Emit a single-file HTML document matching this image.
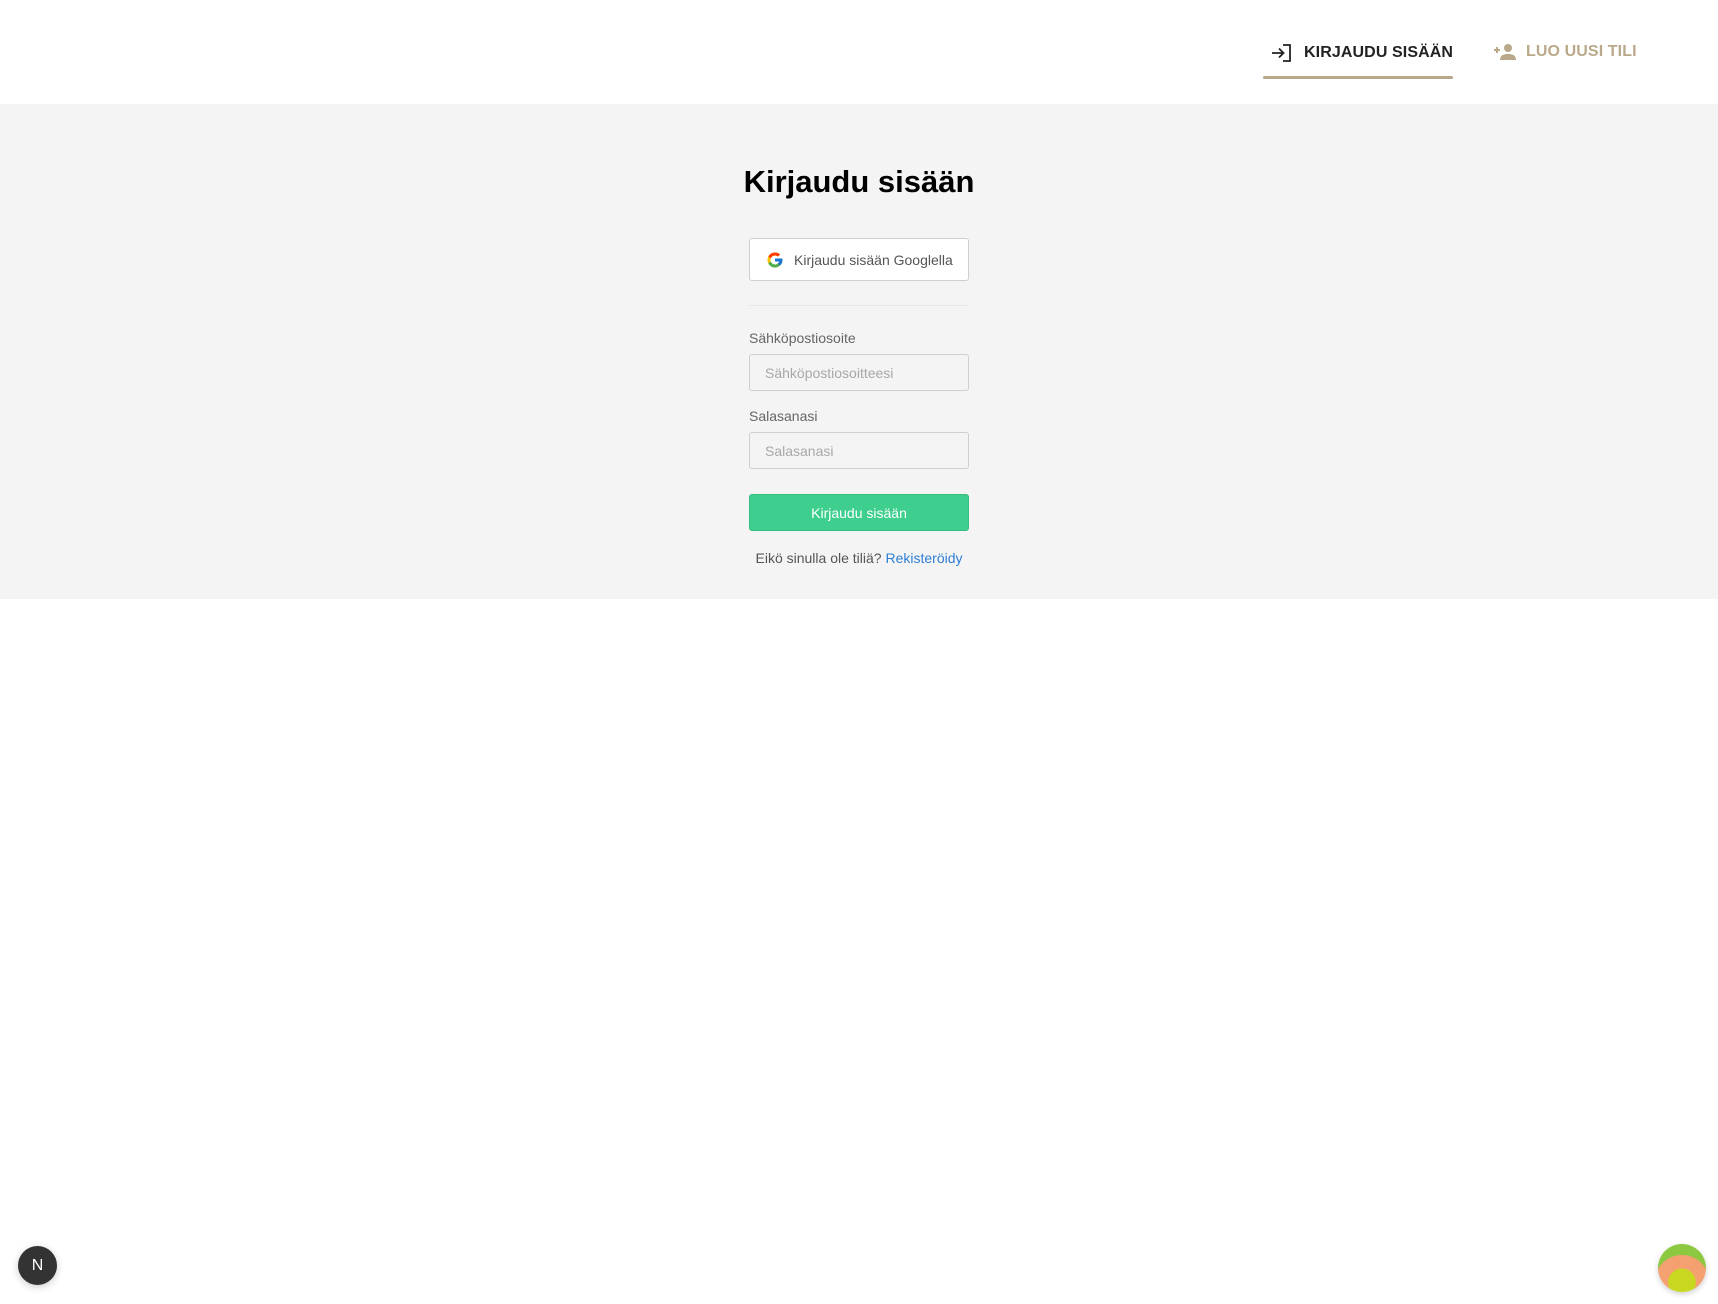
<!DOCTYPE html>
<html><head><meta charset="utf-8"><style>
*{box-sizing:border-box;margin:0;padding:0}
body{width:1718px;height:1304px;background:#fff;font-family:"Liberation Sans",Arial,sans-serif;position:relative;overflow:hidden}
.hdr{height:104px;position:relative;background:#fff}
.nav{position:absolute;top:43px;font-weight:bold;font-size:16px;letter-spacing:0.1px;display:flex;align-items:center;font-family:"Liberation Sans",sans-serif}
.n1{left:1271px;color:#222}
.n2{left:1493px;color:#b9a88a}
.ul{position:absolute;left:1263px;top:76px;width:190px;height:3px;background:#b6a888;border-radius:2px}
.main{background:#f4f4f4;height:495px;position:relative}
h1{position:absolute;left:0;width:1718px;text-align:center;top:60px;font-size:31px;font-weight:bold;color:#000;font-family:"Liberation Sans",sans-serif}
.col{position:absolute;left:749px;width:220px}
.g{top:134px;height:43px;background:#fff;border:1px solid #cfcfcf;border-radius:3px;display:flex;align-items:center;padding-left:16px;font-size:14px;color:#555}
.div{top:201px;height:1px;background:#e6e6e6}
.lbl{font-size:14px;color:#666}
.inp{height:37px;border:1px solid #cfcfcf;border-radius:3px;background:#f4f4f4;font-size:14px;color:#a8a8a8;padding-left:15px;display:flex;align-items:center}
.btn{top:390px;height:37px;background:#3ecf8e;border:1px solid #38bc80;border-radius:3px;color:#fff;font-size:14px;display:flex;align-items:center;justify-content:center}
.ft{top:446px;text-align:center;font-size:14px;color:#555;width:220px}
.ft a{color:#2f7fd6;text-decoration:none}
</style></head><body>
<div class="hdr">
<div class="nav n1"><svg width="22" height="20" viewBox="0 0 22 20" style="margin-right:11px"><path d="M1 10H12M8 5.5L12.5 10L8 14.5" fill="none" stroke="#222" stroke-width="1.8"/><path d="M12 2H19V18H12" fill="none" stroke="#222" stroke-width="1.8"/></svg>KIRJAUDU SISÄÄN</div>
<div class="nav n2"><svg width="24" height="18" viewBox="0 0 24 18" style="margin-right:9px"><path d="M1 7H7M4 4V10" stroke="#b9a88a" stroke-width="2"/><circle cx="15" cy="5" r="4" fill="#b9a88a"/><path d="M7 17C7 12 11 11 15 11C19 11 23 12 23 17Z" fill="#b9a88a"/></svg>LUO UUSI TILI</div>
<div class="ul"></div>
</div>
<div class="main">
<h1>Kirjaudu sisään</h1>
<div class="col g"><svg width="18" height="18" viewBox="0 0 48 48" style="margin-right:10px"><path fill="#FFC107" d="M43.6 20.5H42V20H24v8h11.3C33.7 32.7 29.2 36 24 36c-6.6 0-12-5.4-12-12s5.4-12 12-12c3.1 0 5.8 1.2 7.9 3.1l5.7-5.7C34 6.1 29.3 4 24 4 13 4 4 13 4 24s9 20 20 20 20-9 20-20c0-1.3-.1-2.4-.4-3.5z"/><path fill="#FF3D00" d="M6.3 14.7l6.6 4.8C14.7 15.1 19 12 24 12c3.1 0 5.8 1.2 7.900 3.1l5.7-5.7C34 6.1 29.3 4 24 4 16.3 4 9.7 8.3 6.3 14.7z"/><path fill="#4CAF50" d="M24 44c5.2 0 9.9-2 13.4-5.2l-6.2-5.2C29.2 35.1 26.7 36 24 36c-5.2 0-9.6-3.3-11.3-8l-6.5 5C9.5 39.6 16.2 44 24 44z"/><path fill="#1976D2" d="M43.6 20.5H42V20H24v8h11.3c-.8 2.2-2.2 4.2-4.1 5.6l6.2 5.2C37 39.2 44 34 44 24c0-1.3-.1-2.4-.4-3.5z"/></svg>Kirjaudu sisään Googlella</div>
<div class="col div"></div>
<div class="col lbl" style="top:226px">Sähköpostiosoite</div>
<div class="col inp" style="top:250px">Sähköpostiosoitteesi</div>
<div class="col lbl" style="top:304px">Salasanasi</div>
<div class="col inp" style="top:328px">Salasanasi</div>
<div class="col btn">Kirjaudu sisään</div>
<div class="col ft">Eikö sinulla ole tiliä? <a>Rekisteröidy</a></div>
</div>
<div style="position:absolute;left:18px;top:1246px;width:39px;height:39px;border-radius:50%;background:#333;box-shadow:0 2px 8px rgba(0,0,0,.2);color:#fff;font-size:16px;display:flex;align-items:center;justify-content:center;font-family:'Liberation Sans',sans-serif">N</div>
<div style="position:absolute;left:1658px;top:1244px;width:48px;height:48px;border-radius:50%;background:radial-gradient(circle at 50% 80%,#c8d820 0 30%,#f4a070 31% 60%,#8cc840 61%);box-shadow:0 2px 6px rgba(0,0,0,.2)"></div>
</body></html>
